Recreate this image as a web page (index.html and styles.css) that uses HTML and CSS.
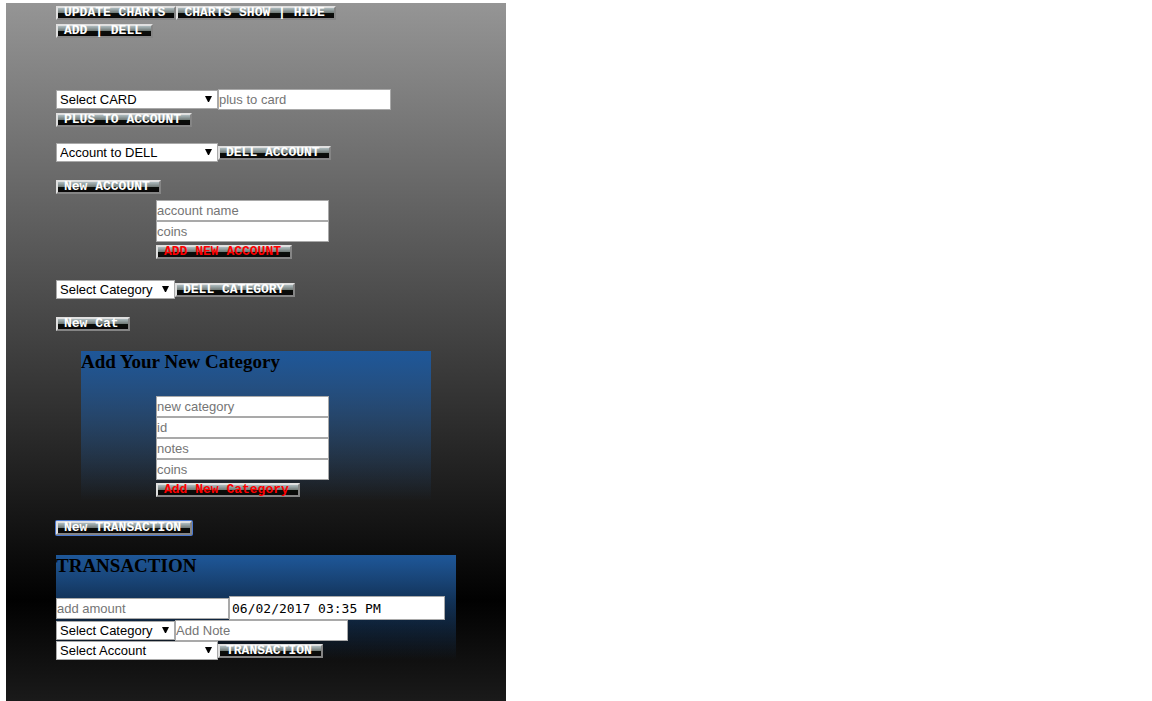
FILE: index.html
```html
<!DOCTYPE html>
<html lang="en">
<head>
<meta charset="utf-8">
<title>Accounts</title>
<link rel="stylesheet" href="styles.css">
</head>
<body>
<main class="board">
  <div class="toolbar">
    <button class="btn" type="button">UPDATE CHARTS</button>
    <button class="btn" type="button">CHARTS SHOW | HIDE</button>
    <button class="btn" type="button">ADD | DELL</button>
  </div>

  <form class="group">
    <div class="row">
      <select class="select wide" aria-label="Card"><option>Select CARD</option></select>
      <input class="field" type="text" placeholder="plus to card" aria-label="Amount to add to card">
    </div>
    <button class="btn after-field" type="button">PLUS TO ACCOUNT</button>
  </form>

  <form class="row delete-account">
    <select class="select wide" aria-label="Account to delete"><option>Account to DELL</option></select>
    <button class="btn" type="button">DELL ACCOUNT</button>
  </form>

  <button class="btn" type="button">New ACCOUNT</button>
  <form class="stack new-account">
    <input class="field" type="text" placeholder="account name" aria-label="Account name">
    <input class="field" type="text" placeholder="coins" aria-label="Account coins">
    <button class="btn danger after-field" type="button">ADD NEW ACCOUNT</button>
  </form>

  <form class="row delete-category">
    <select class="select" aria-label="Category to delete"><option>Select Category</option></select>
    <button class="btn" type="button">DELL CATEGORY</button>
  </form>

  <button class="btn" type="button">New Cat</button>
  <section class="panel category">
    <h3 class="title">Add Your New Category</h3>
    <form class="stack">
      <input class="field" type="text" placeholder="new category" aria-label="New category">
      <input class="field" type="text" placeholder="id" aria-label="Category id">
      <input class="field" type="text" placeholder="notes" aria-label="Category notes">
      <input class="field" type="text" placeholder="coins" aria-label="Category coins">
      <button class="btn danger after-field" type="button">Add New Category</button>
    </form>
  </section>

  <button class="btn active" type="button">New TRANSACTION</button>
  <section class="panel transaction">
    <h3 class="title">TRANSACTION</h3>
    <form>
      <div class="row">
        <input class="field" type="text" placeholder="add amount" aria-label="Amount">
        <input class="field date" type="text" value="06/02/2017 03:35 PM" aria-label="Date and time">
      </div>
      <div class="row">
        <select class="select" aria-label="Category"><option>Select Category</option></select>
        <input class="field" type="text" placeholder="Add Note" aria-label="Note">
      </div>
      <div class="row">
        <select class="select wide" aria-label="Account"><option>Select Account</option></select>
        <button class="btn" type="button">TRANSACTION</button>
      </div>
    </form>
  </section>
</main>
</body>
</html>
```

FILE: styles.css
```css
* {
  box-sizing: border-box;
}

body {
  margin: 0;
  padding: 3px 6px 0;
  background: #fff;
  font-family: "Liberation Serif", "Times New Roman", serif;
}

.board {
  max-width: 500px;
  padding: 3px 50px 41px;
  display: flex;
  flex-direction: column;
  align-items: flex-start;
  background: linear-gradient(#959595 0, #0d0d0d 549px, #010101 597px, #0a0a0a 633px, #4e4e4e 908px);
}

.toolbar {
  display: flex;
  flex-wrap: wrap;
  row-gap: 4px;
  max-width: 300px;
  margin-bottom: 51px;
}

.group {
  margin-bottom: 16px;
}

.row {
  display: flex;
  align-items: center;
}

.stack {
  display: flex;
  flex-direction: column;
  align-items: flex-start;
}

.btn {
  display: block;
  height: 14px;
  margin: 0;
  padding: 0 9px 0 6px;
  border: 2px solid;
  border-color: #e0e0e0 #858585 #858585 #e0e0e0;
  border-radius: 0;
  background: linear-gradient(#aebcbf 0%, #6e7774 50%, #0a0e0a 51%, #0a0809 100%);
  color: #fff;
  font: bold 13px/10px "Liberation Mono", "Courier New", monospace;
  white-space: nowrap;
}

.danger {
  color: #f00;
}

.active {
  border-radius: 1px;
  box-shadow: 0 0 0 1px #4a78d0;
}

.after-field {
  margin-top: 3px;
}

.field,
.select {
  display: block;
  margin: 0;
  border: 1px solid #a9a9a9;
  border-radius: 0;
  background-color: #fff;
  color: #000;
  font: 13px/15px "Liberation Sans", Arial, sans-serif;
}

.field {
  width: 173px;
  height: 21px;
  padding: 1px 0;
}

.field::placeholder {
  color: #757575;
  opacity: 1;
}

.date {
  width: 216px;
  height: 24px;
  padding: 1px 2px;
  font-family: "DejaVu Sans Mono", monospace;
}

.select {
  width: 119px;
  height: 19px;
  padding: 0 16px 0 3px;
  appearance: none;
  background-image: url("data:image/svg+xml,%3Csvg xmlns='http://www.w3.org/2000/svg' width='7' height='6'%3E%3Cpath d='M0 0h7L4 6H3z'/%3E%3C/svg%3E");
  background-repeat: no-repeat;
  background-position: right 5px top 5px;
}

.wide {
  width: 162px;
}

.delete-account {
  margin-bottom: 18px;
}

.new-account {
  margin: 6px 0 21px 100px;
}

.delete-category {
  margin-bottom: 18px;
}

.title {
  margin: 0;
  color: #000;
  font-size: 19px;
  line-height: 22px;
}

.panel {
  background: linear-gradient(#1e5799, rgba(30, 87, 153, 0));
}

.category {
  width: calc(100% - 50px);
  margin: 20px 25px;
  padding-bottom: 4px;
}

.category .stack {
  margin: 23px 0 0 75px;
}

.transaction {
  width: 100%;
  margin-top: 20px;
}

.transaction .title {
  margin-bottom: 19px;
}
```
